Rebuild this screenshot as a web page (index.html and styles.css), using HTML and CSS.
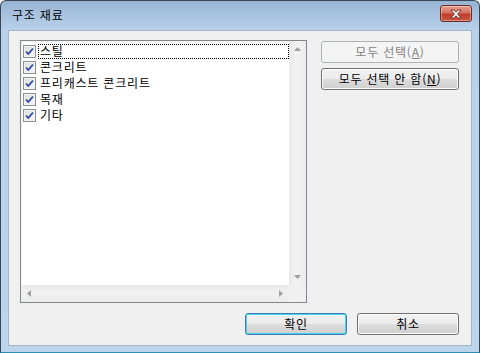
FILE: index.html
```html
<!DOCTYPE html>
<html lang="ko">
<head>
<meta charset="utf-8">
<title>구조 재료</title>
<link rel="stylesheet" href="styles.css">
</head>
<body>
<div class="window">
  <div class="titlebar">
    <span class="title">구조 재료</span>
    <div class="close">
      <svg width="14" height="10" viewBox="0 0 14 10"><path d="M2 1 L5 1 L7 3.2 L9 1 L12 1 L8.6 5 L12 9 L9 9 L7 6.8 L5 9 L2 9 L5.4 5 Z" fill="#fff" stroke="#5a2018" stroke-width="0.8"/></svg>
    </div>
  </div>
  <div class="client">
    <div class="top">
      <div class="listbox">
        <div class="items">
          <div class="item focus"><span class="cb"><svg width="9" height="9" viewBox="0 0 9 9"><path d="M1 4.5 L3.3 7 L8 1.5" fill="none" stroke="#2a4aa8" stroke-width="1.8"/></svg></span><span class="label">스틸</span></div>
          <div class="item"><span class="cb"><svg width="9" height="9" viewBox="0 0 9 9"><path d="M1 4.5 L3.3 7 L8 1.5" fill="none" stroke="#2a4aa8" stroke-width="1.8"/></svg></span><span class="label">콘크리트</span></div>
          <div class="item"><span class="cb"><svg width="9" height="9" viewBox="0 0 9 9"><path d="M1 4.5 L3.3 7 L8 1.5" fill="none" stroke="#2a4aa8" stroke-width="1.8"/></svg></span><span class="label">프리캐스트 콘크리트</span></div>
          <div class="item"><span class="cb"><svg width="9" height="9" viewBox="0 0 9 9"><path d="M1 4.5 L3.3 7 L8 1.5" fill="none" stroke="#2a4aa8" stroke-width="1.8"/></svg></span><span class="label">목재</span></div>
          <div class="item"><span class="cb"><svg width="9" height="9" viewBox="0 0 9 9"><path d="M1 4.5 L3.3 7 L8 1.5" fill="none" stroke="#2a4aa8" stroke-width="1.8"/></svg></span><span class="label">기타</span></div>
        </div>
        <div class="vscroll">
          <span class="arrow"><svg width="7" height="4" viewBox="0 0 7 4"><path d="M0 4 L3.5 0 L7 4 Z" fill="#a0a0a0"/></svg></span>
          <span class="arrow"><svg width="7" height="4" viewBox="0 0 7 4"><path d="M0 0 L3.5 4 L7 0 Z" fill="#a0a0a0"/></svg></span>
        </div>
        <div class="hscroll">
          <span class="arrow"><svg width="4" height="7" viewBox="0 0 4 7"><path d="M4 0 L0 3.5 L4 7 Z" fill="#a0a0a0"/></svg></span>
          <span class="arrow"><svg width="4" height="7" viewBox="0 0 4 7"><path d="M0 0 L4 3.5 L0 7 Z" fill="#a0a0a0"/></svg></span>
        </div>
        <div class="corner"></div>
      </div>
      <div class="side">
        <div class="btn disabled">모두 선택(<u>A</u>)</div>
        <div class="btn">모두 선택 안 함(<u>N</u>)</div>
      </div>
    </div>
    <div class="bottom">
      <div class="btn wide default">확인</div>
      <div class="btn wide">취소</div>
    </div>
  </div>
</div>
</body>
</html>
```
FILE: styles.css
```css
* { box-sizing: border-box; }
html, body { margin: 0; padding: 0; }
body {
  width: 480px; height: 353px; overflow: hidden;
  background: #ffffff;
  font-family: "Noto Sans CJK KR", "DejaVu Sans", sans-serif;
  font-size: 12px;
  letter-spacing: 0.8px;
  color: #000;
}
.window {
  width: 480px; height: 353px;
  border: 1px solid #3a4656;
  border-radius: 6px 6px 0 0;
  background: linear-gradient(to bottom, #97b3d3 0px, #a9c3e0 14px, #b9d1ea 30px, #bcd4ec 100%);
  display: flex; flex-direction: column;
  padding: 0 7px 6px 7px;
  border-bottom-color: #2a8fb0;
}
.titlebar {
  height: 29px;
  display: flex; align-items: center; justify-content: space-between;
  padding: 0 0 3px 4px;
}
.title {
  font-size: 12px; color: #000; line-height: 14px;
  margin-top: 2px;
}
.close {
  width: 32px; height: 17px;
  margin-top: -1px;
  border: 1px solid #6e2a22;
  border-radius: 3px;
  background: linear-gradient(to bottom, #e6a194 0%, #d3705e 45%, #c03e2a 55%, #c85642 100%);
  box-shadow: inset 0 0 0 1px rgba(255,255,255,0.35);
  display: flex; align-items: center; justify-content: center;
}
.close svg { display: block; }
.client {
  flex: 1;
  background: #f0f0f0;
  border: 1px solid #a3b5c9;
  padding: 9px 12px 0 11px;
  display: flex; flex-direction: column;
}
.top { display: flex; }
.listbox {
  width: 287px; height: 263px;
  border: 1px solid #82878f;
  background: #fff;
  display: grid;
  grid-template-columns: 1fr 17px;
  grid-template-rows: 1fr 17px;
  box-shadow: inset 0 0 0 1px #f4f4f4;
}
.items { padding: 2px 0 0 2px; overflow: hidden; }
.item {
  display: flex; align-items: center;
  height: 16px;
}
.cb {
  width: 13px; height: 13px; flex: none;
  border: 1px solid #8e8f8f;
  background: linear-gradient(135deg, #dcdcdc, #f6f6f6);
  box-shadow: inset 0 0 0 1px #f4f4f4;
  display: flex; align-items: center; justify-content: center;
  margin-right: 2px;
}
.cb svg { display: block; }
.label {
  line-height: 14px; height: 15px; padding: 0 1px;
  display: flex; align-items: center;
  border: 1px dotted transparent;
}
.item.focus .label {
  flex: 1;
  border: 1px dotted #000;
}
.vscroll {
  background: linear-gradient(to right, #e8e8e8, #f2f2f2 40%, #ececec);
  display: flex; flex-direction: column; justify-content: space-between; align-items: center;
  padding: 6px 0 6px;
}
.hscroll {
  background: linear-gradient(to bottom, #e8e8e8, #f2f2f2 40%, #ececec);
  display: flex; justify-content: space-between; align-items: center;
  padding: 0 6px;
}
.arrow { display: flex; }
.arrow svg { display: block; }
.corner { background: #f0f0f0; }
.side {
  display: flex; flex-direction: column; gap: 5px;
  margin-left: 14px; padding-top: 1px;
}
.btn {
  width: 138px; height: 22px;
  border: 1px solid #707070;
  border-radius: 3px;
  background: linear-gradient(to bottom, #f2f2f2 0%, #ebebeb 50%, #dddddd 51%, #cfcfcf 100%);
  box-shadow: inset 0 0 0 1px #fcfcfc;
  display: flex; align-items: center; justify-content: center;
  line-height: 14px;
}
.btn.disabled {
  border-color: #adb2b5;
  background: #f4f4f4;
  color: #838383;
  box-shadow: none;
}
.btn u { text-decoration: underline; }
.bottom {
  display: flex; justify-content: flex-end; gap: 10px;
  margin-top: 10px;
}
.btn.wide { width: 102px; }
.btn.default {
  border-color: #3c7fb1;
  box-shadow: inset 0 0 0 1px #48d0f6;
}
```
